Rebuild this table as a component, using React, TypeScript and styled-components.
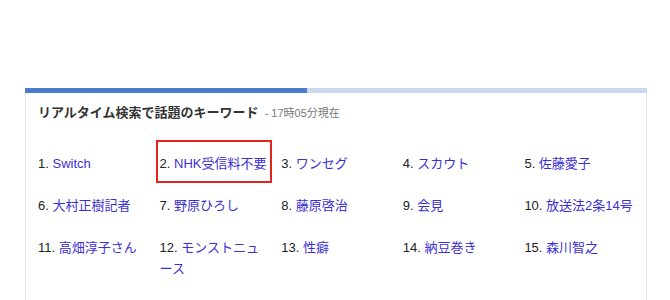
import React from 'react';
import styled, { createGlobalStyle } from 'styled-components';

const GlobalStyle = createGlobalStyle`
  body {
    margin: 0;
    background: #fff;
    font-family: "Liberation Sans", "Noto Sans CJK JP", sans-serif;
  }
`;

const StyledPanel = styled.section`
  margin: 88px 0 0 25px;
  width: 622px;
  height: 212px;
  box-sizing: border-box;
  border-left: 1px solid #e4e6ea;
  border-right: 1px solid #e4e6ea;
`;

const StyledTrack = styled.div`
  height: 5px;
  margin: 0 -1px;
  background-color: #c9d7ef;
`;

const StyledFill = styled.div`
  height: 100%;
  background-color: #4a7ccd;
`;

const StyledHeader = styled.h2`
  margin: 0;
  padding: 10px 0 0 12px;
  font-size: 13px;
  line-height: 20px;
  font-weight: bold;
  color: #333;
`;

const StyledTime = styled.span`
  margin-left: 6px;
  font-size: 11px;
  font-weight: normal;
  color: #777;
`;

const StyledList = styled.ol`
  list-style: none;
  margin: 30px 0 0;
  padding: 0 0 0 12px;
  display: grid;
  grid-template-columns: repeat(5, 1fr);
  row-gap: 21px;
`;

interface IItem {
  highlighted?: boolean;
}

const StyledItem = styled.li<IItem>`
  position: relative;
  padding-right: 11px;
  font-size: 13px;
  line-height: 21px;
  color: #222;

  &::after {
    content: '';
    display: ${({ highlighted }) => (highlighted ? 'block' : 'none')};
    position: absolute;
    left: -4px;
    top: -13px;
    width: 116px;
    height: 43px;
    box-sizing: border-box;
    border: 2px solid #e4231c;
  }
`;

const StyledLink = styled.a`
  color: #3b30d4;
  text-decoration: none;
`;

const keywords = [
  'Switch',
  'NHK受信料不要',
  'ワンセグ',
  'スカウト',
  '佐藤愛子',
  '大村正樹記者',
  '野原ひろし',
  '藤原啓治',
  '会見',
  '放送法2条14号',
  '高畑淳子さん',
  'モンストニュース',
  '性癖',
  '納豆巻き',
  '森川智之',
];

const App: React.FC = () => {
  const progress = 45.4;

  return (
    <>
      <GlobalStyle />
      <StyledPanel>
        <StyledTrack>
          <StyledFill style={{ width: `${progress}%` }} />
        </StyledTrack>
        <StyledHeader>
          リアルタイム検索で話題のキーワード
          <StyledTime>- 17時05分現在</StyledTime>
        </StyledHeader>
        <StyledList>
          {keywords.map((word, i) => (
            <StyledItem key={word} highlighted={i === 1}>
              {i + 1}. <StyledLink href="#">{word}</StyledLink>
            </StyledItem>
          ))}
        </StyledList>
      </StyledPanel>
    </>
  );
};

export default App;
